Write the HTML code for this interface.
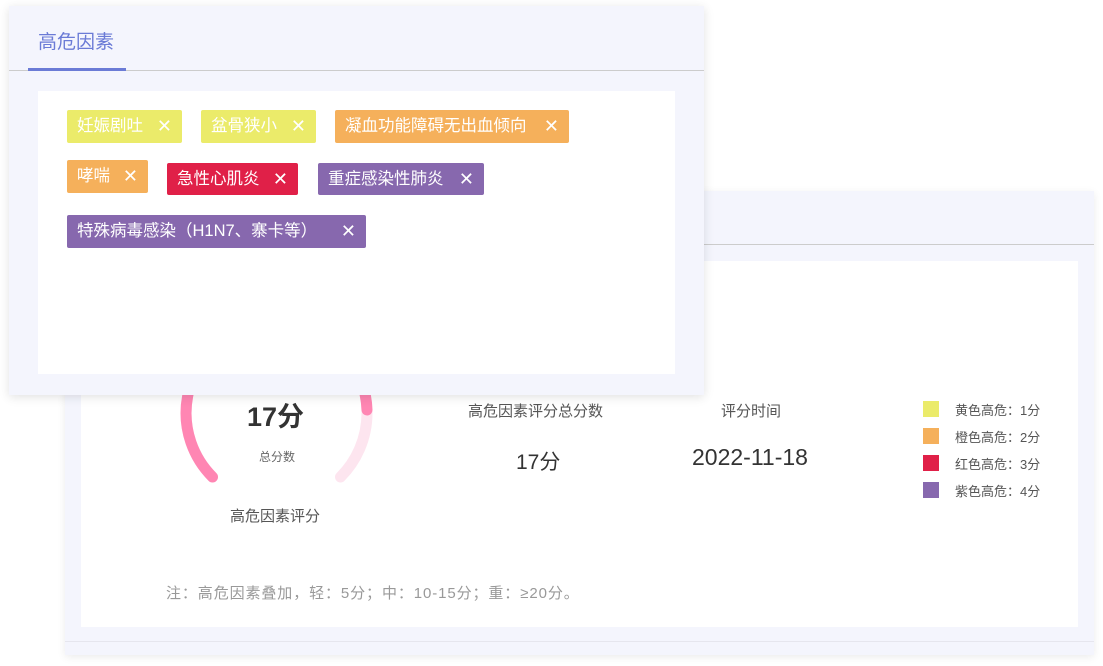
<!DOCTYPE html>
<html><head><meta charset="utf-8"><style>
*{margin:0;padding:0;box-sizing:border-box}
body{width:1103px;height:666px;background:#fff;position:relative;overflow:hidden;font-family:"Liberation Sans","Noto Sans CJK SC",sans-serif}
.back{position:absolute;left:65px;top:191px;width:1029px;height:464px;background:#f4f5fd;box-shadow:0 2px 8px rgba(0,0,0,.08)}
.back .hl{position:absolute;left:0;right:0;top:53px;height:1px;background:#ccc}
.back .bl{position:absolute;left:0;right:0;top:450px;height:1px;background:#e6e6ee}
.back .in{position:absolute;left:16px;top:70px;width:997px;height:366px;background:#fff}
.front{position:absolute;left:9px;top:6px;width:695px;height:389px;background:#f4f5fd;box-shadow:0 2px 10px rgba(0,0,0,.12)}
.tab{position:absolute;left:29px;top:21px;font-size:19px;color:#6b7bd6}
.ul{position:absolute;left:19px;top:62px;width:98px;height:3px;background:#6b7bd6}
.dv{position:absolute;left:0;right:0;top:64px;height:1px;background:#ccc}
.wb{position:absolute;left:29px;top:85px;width:637px;height:283px;background:#fff}
.tag{position:absolute;height:33px;border-radius:2px;color:#fff;font-size:16.5px;line-height:33px;padding-left:10px;white-space:nowrap;overflow:hidden}
.tag i{position:absolute;right:10px;top:0;font-style:normal;font-size:18px}
.t{position:absolute;color:#555;white-space:nowrap}
.lg{position:absolute;left:923px;width:16px;height:16px}
</style></head><body>
<div class="back"><div class="hl"></div><div class="in"></div><div class="bl"></div></div>
<svg style="position:absolute;left:0;top:0" width="1103" height="666">
<path d="M212.5 477 A90.5 90.5 0 1 1 340.5 477" fill="none" stroke="#fde5ef" stroke-width="11" stroke-linecap="round"/>
<path d="M212.5 477 A90.5 90.5 0 1 1 367 410" fill="none" stroke="#ff86b3" stroke-width="11" stroke-linecap="round"/>
</svg>
<div class="t" style="left:247px;top:395px;font-size:27px;font-weight:bold;color:#333">17分</div>
<div class="t" style="left:259px;top:448px;font-size:12px;color:#666">总分数</div>
<div class="t" style="left:230px;top:505px;font-size:15px">高危因素评分</div>
<div class="t" style="left:468px;top:400px;font-size:15px">高危因素评分总分数</div>
<div class="t" style="left:721px;top:400px;font-size:15px">评分时间</div>
<div class="t" style="left:516px;top:446px;font-size:21px;color:#333">17分</div>
<div class="t" style="left:692px;top:444px;font-size:23px;color:#333">2022-11-18</div>
<div class="lg" style="top:401px;background:#ebeb6a"></div><div class="t" style="left:955px;top:400px;font-size:13px">黄色高危：1分</div>
<div class="lg" style="top:428px;background:#f5b05b"></div><div class="t" style="left:955px;top:427px;font-size:13px">橙色高危：2分</div>
<div class="lg" style="top:455px;background:#e02048"></div><div class="t" style="left:955px;top:454px;font-size:13px">红色高危：3分</div>
<div class="lg" style="top:482px;background:#8768ae"></div><div class="t" style="left:955px;top:481px;font-size:13px">紫色高危：4分</div>
<div class="t" style="left:166px;top:582px;font-size:15px;color:#999;letter-spacing:0.9px">注：高危因素叠加，轻：5分；中：10-15分；重：≥20分。</div>
<div class="front"><div class="tab">高危因素</div><div class="dv"></div><div class="ul"></div><div class="wb"></div></div>
<div class="tag" style="left:67px;top:110px;width:115px;background:#ebeb6a">妊娠剧吐<i>✕</i></div>
<div class="tag" style="left:201px;top:110px;width:115px;background:#ebeb6a">盆骨狭小<i>✕</i></div>
<div class="tag" style="left:335px;top:110px;width:234px;background:#f5b05b">凝血功能障碍无出血倾向<i>✕</i></div>
<div class="tag" style="left:67px;top:160px;width:81px;background:#f5b05b">哮喘<i>✕</i></div>
<div class="tag" style="left:167px;top:163px;width:131px;height:32px;line-height:32px;background:#e02048">急性心肌炎<i>✕</i></div>
<div class="tag" style="left:318px;top:163px;width:166px;height:32px;line-height:32px;background:#8768ae">重症感染性肺炎<i>✕</i></div>
<div class="tag" style="left:67px;top:215px;width:299px;background:#8768ae">特殊病毒感染（H1N7、寨卡等）<i>✕</i></div>
</body></html>
